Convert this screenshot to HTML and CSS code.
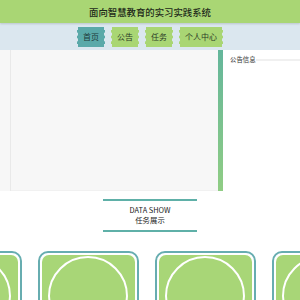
FILE: index.html
```html
<!DOCTYPE html>
<html lang="zh-CN">
<head>
  <meta charset="UTF-8" />
  <title>面向智慧教育的实习实践系统</title>
  <link rel="stylesheet" href="styles.css">
</head>
<body>

  <!-- Header -->
  <header class="top">
    <h1>面向智慧教育的实习实践系统</h1>
  </header>

  <!-- Nav -->
  <nav class="nav">
    <a href="#" class="active">首页</a>
    <a href="#">公告</a>
    <a href="#">任务</a>
    <a href="#">个人中心</a>
  </nav>

  <!-- Banner + notices -->
  <div class="main-row">
    <div class="side"></div>
    <div class="banner"></div>
    <div class="divider"></div>
    <div class="notice">
      <div class="notice-title"><span>公告信息</span></div>
    </div>
  </div>

  <!-- Data show -->
  <div class="show-head">
    <p>DATA SHOW</p>
    <p>任务展示</p>
  </div>

  <div class="cards">
    <div class="card"><div class="card-inner"><div class="pic"></div></div></div>
    <div class="card"><div class="card-inner"><div class="pic"></div></div></div>
    <div class="card"><div class="card-inner"><div class="pic"></div></div></div>
    <div class="card"><div class="card-inner"><div class="pic"></div></div></div>
  </div>

</body>
</html>
```

FILE: styles.css
```css
* {
  box-sizing: border-box;
}

body {
  margin: 0;
  font-family: "Noto Sans CJK SC", "Noto Sans", sans-serif;
  background: #fff;
  color: #222;
  overflow: hidden;
}

.top {
  background: #a9d674;
  height: 23px;
  display: flex;
  align-items: center;
  justify-content: center;
  box-shadow: 0 1px 2px rgba(0, 0, 0, 0.15);
  position: relative;
}

.top h1 {
  margin: 0;
  font-size: 9.4px;
  font-weight: 500;
  color: #1e2a1a;
}

.nav {
  background: #dbe7ef;
  height: 27px;
  display: flex;
  justify-content: center;
  align-items: center;
  gap: 6px;
  padding-top: 1px;
}

.nav a {
  display: block;
  height: 20px;
  line-height: 20px;
  padding: 0 5px;
  font-size: 8px;
  color: #2c3a26;
  text-decoration: none;
  background: #a9d674;
  border-left: 1px dashed #dbe7ef;
  border-right: 1px dashed #dbe7ef;
}

.nav a.active {
  background: #5aa9a9;
  color: #1d3a3a;
}

.main-row {
  display: flex;
  height: 141px;
}

.side {
  width: 11px;
  background: #f7f7f7;
  border-right: 1px solid #e9e9e9;
}

.banner {
  flex: 1;
  background: #f7f7f7;
  border-bottom: 1px solid #f1f1f1;
}

.divider {
  width: 5px;
  background: linear-gradient(#64b69b, #90cd84);
}

.notice {
  width: 77px;
  padding: 5px 0 0 7px;
}

.notice-title {
  display: flex;
  align-items: center;
  font-size: 6.4px;
  color: #333;
}

.notice-title::after {
  content: "";
  flex: 1;
  height: 2px;
  background: #f0f0f0;
}

.show-head {
  width: 94px;
  margin: 8px auto 0;
  border-top: 2px solid #5fb0a8;
  border-bottom: 2px solid #5fb0a8;
  padding: 4px 0 5px;
  text-align: center;
  font-size: 7.4px;
  color: #222;
}

.show-head p {
  margin: 0;
  line-height: 10px;
}

.cards {
  display: flex;
  justify-content: center;
  gap: 16px;
  padding-right: 7px;
  margin-top: 19px;
}

.card {
  flex: none;
  width: 101px;
  height: 110px;
  border: 2px solid #67adb0;
  border-radius: 10px;
  padding: 2px;
  background: #fff;
}

.card-inner {
  height: 100%;
  background: #a8d677;
  border-radius: 7px;
  display: flex;
  justify-content: center;
}

.pic {
  width: 80px;
  height: 80px;
  border: 2px solid #fff;
  border-radius: 50%;
  margin-top: 1px;
}
```
